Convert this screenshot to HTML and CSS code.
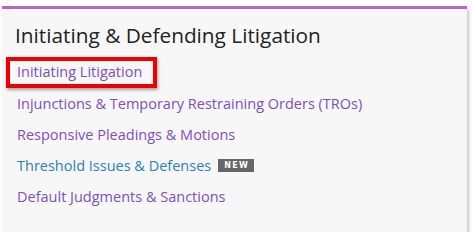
FILE: index.html
```html
<!DOCTYPE html>
<html>
<head>
<meta charset="utf-8">
<link rel="stylesheet" href="styles.css">
</head>
<body>
<div class="card">
  <h2 class="title">Initiating &amp; Defending Litigation</h2>
  <ul class="links">
    <li><a class="link highlighted" href="#">Initiating Litigation</a></li>
    <li><a class="link" href="#">Injunctions &amp; Temporary Restraining Orders (TROs)</a></li>
    <li><a class="link" href="#">Responsive Pleadings &amp; Motions</a></li>
    <li><a class="link blue" href="#">Threshold Issues &amp; Defenses</a><span class="badge">NEW</span></li>
    <li><a class="link" href="#">Default Judgments &amp; Sanctions</a></li>
  </ul>
</div>
</body>
</html>
```
FILE: styles.css
```css
html, body {
  margin: 0;
  padding: 0;
  background: #ffffff;
}
body {
  padding: 6px 5px 0 2px;
  font-family: "Open Sans", "Noto Sans", sans-serif;
}
.card {
  width: 465px;
  height: 226px;
  box-sizing: border-box;
  background: #f7f7f7;
  border-top: 3px solid #b963c8;
  box-shadow: 2px 3px 3px rgba(0,0,0,0.22);
  padding: 12px 0 0 13px;
}
.title {
  margin: 0;
  font-size: 20.8px;
  font-weight: 400;
  color: #222222;
  line-height: 28px;
}
.links {
  list-style: none;
  margin: 8px 0 0 0;
  padding: 0;
}
.links li {
  height: 31px;
  display: flex;
  align-items: center;
}
.link {
  font-size: 14.5px;
  color: #7e4fbf;
  text-decoration: none;
  padding: 0 0 0 2px;
  line-height: 20px;
}
.link.highlighted {
  margin-left: -9px;
  padding: 1px 11px 2px 7px;
  border: 4px solid #ee0000;
  box-shadow: 1px 2px 3px rgba(0,0,0,0.35);
}
.link.blue {
  color: #2c7fbf;
}
.badge {
  margin-left: 7px;
  background: #666666;
  color: #ffffff;
  font-family: "DejaVu Sans", sans-serif;
  font-size: 8px;
  font-weight: 700;
  letter-spacing: 1.3px;
  padding: 1px 5px 1px 6px;
  line-height: 11px;
}
```
